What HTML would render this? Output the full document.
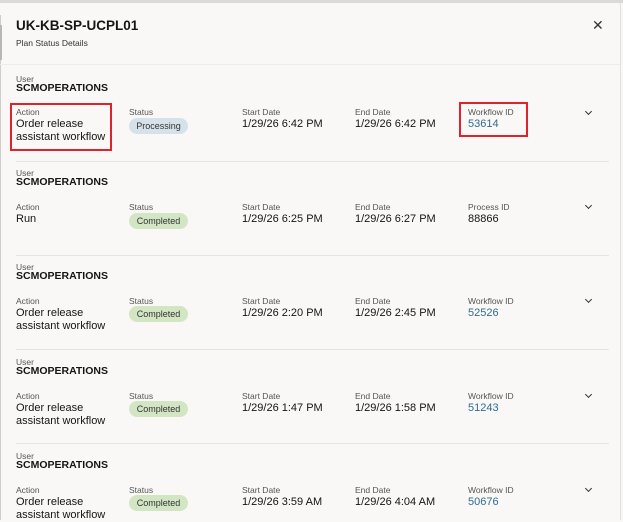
<!DOCTYPE html>
<html><head><meta charset="utf-8"><style>
*{margin:0;padding:0;box-sizing:border-box}
body{width:623px;height:520px;overflow:hidden;background:#f9f8f6;font-family:"Liberation Sans",sans-serif;color:#161513;position:relative}
.a{position:absolute;white-space:nowrap}
.lbl{font-size:8.5px;color:#555}
.val{font-size:11px;line-height:13px}
.usr{font-size:10.5px;font-weight:bold}
.pill{font-size:9px;height:16px;line-height:16px;width:59px;text-align:center;border-radius:8px;color:#333}
.g{background:#d3e6c3}
.b{background:#d6e2e9}
.lnk{color:#2f6d93}
.div{height:1px;background:#e7e5e2;left:16px;width:593px}
.chev{width:5px;height:5px;border-right:1.3px solid #333;border-bottom:1.3px solid #333;transform:rotate(45deg)}
.red{border:2px solid #e0222c}
</style></head><body>
<div class="a" style="left:0;top:0;width:623px;height:3px;background:#dcdad7"></div>
<div class="a" style="left:0;top:15px;width:1px;height:505px;background:#cfcdca"></div>
<div class="a" style="left:0;top:25px;width:2px;height:35px;background:#b9b7b4"></div>
<div class="a" style="left:620px;top:3px;width:1px;height:517px;background:#e2e0dd"></div>
<div class="a" style="left:16px;top:18px;font-size:13.5px;font-weight:bold">UK-KB-SP-UCPL01</div>
<div class="a" style="left:16px;top:38px;font-size:8.5px;color:#333">Plan Status Details</div>
<div class="a" style="left:592px;top:17px;font-size:14px;color:#333">✕</div>
<div class="a" style="left:0;top:64px;width:620px;height:1px;background:#efedea"></div>

<div class="a red" style="left:10px;top:103px;width:102px;height:48px"></div>
<div class="a red" style="left:459px;top:102px;width:69px;height:35px"></div>

<div class="a lbl" style="left:16px;top:74px">User</div>
<div class="a usr" style="left:16px;top:82px">SCMOPERATIONS</div>
<div class="a lbl" style="left:16px;top:107px">Action</div>
<div class="a val" style="left:16px;top:118px">Order release<br>assistant workflow</div>
<div class="a lbl" style="left:129px;top:107px">Status</div>
<div class="a pill b" style="left:129px;top:118px">Processing</div>
<div class="a lbl" style="left:242px;top:107px">Start Date</div>
<div class="a val" style="left:242px;top:118px">1/29/26 6:42 PM</div>
<div class="a lbl" style="left:355px;top:107px">End Date</div>
<div class="a val" style="left:355px;top:118px">1/29/26 6:42 PM</div>
<div class="a lbl" style="left:468px;top:107px">Workflow ID</div>
<div class="a val lnk" style="left:468px;top:118px">53614</div>
<div class="a chev" style="left:586px;top:109px"></div>
<div class="a div" style="top:161px"></div>

<div class="a lbl" style="left:16px;top:168px">User</div>
<div class="a usr" style="left:16px;top:176px">SCMOPERATIONS</div>
<div class="a lbl" style="left:16px;top:202px">Action</div>
<div class="a val" style="left:16px;top:213px">Run</div>
<div class="a lbl" style="left:129px;top:202px">Status</div>
<div class="a pill g" style="left:129px;top:213px">Completed</div>
<div class="a lbl" style="left:242px;top:202px">Start Date</div>
<div class="a val" style="left:242px;top:213px">1/29/26 6:25 PM</div>
<div class="a lbl" style="left:355px;top:202px">End Date</div>
<div class="a val" style="left:355px;top:213px">1/29/26 6:27 PM</div>
<div class="a lbl" style="left:468px;top:202px">Process ID</div>
<div class="a val" style="left:468px;top:213px">88866</div>
<div class="a chev" style="left:586px;top:203px"></div>
<div class="a div" style="top:255px"></div>

<div class="a lbl" style="left:16px;top:262px">User</div>
<div class="a usr" style="left:16px;top:270px">SCMOPERATIONS</div>
<div class="a lbl" style="left:16px;top:296px">Action</div>
<div class="a val" style="left:16px;top:307px">Order release<br>assistant workflow</div>
<div class="a lbl" style="left:129px;top:296px">Status</div>
<div class="a pill g" style="left:129px;top:306px">Completed</div>
<div class="a lbl" style="left:242px;top:296px">Start Date</div>
<div class="a val" style="left:242px;top:307px">1/29/26 2:20 PM</div>
<div class="a lbl" style="left:355px;top:296px">End Date</div>
<div class="a val" style="left:355px;top:307px">1/29/26 2:45 PM</div>
<div class="a lbl" style="left:468px;top:296px">Workflow ID</div>
<div class="a val lnk" style="left:468px;top:307px">52526</div>
<div class="a chev" style="left:586px;top:297px"></div>
<div class="a div" style="top:349px"></div>

<div class="a lbl" style="left:16px;top:357px">User</div>
<div class="a usr" style="left:16px;top:365px">SCMOPERATIONS</div>
<div class="a lbl" style="left:16px;top:391px">Action</div>
<div class="a val" style="left:16px;top:402px">Order release<br>assistant workflow</div>
<div class="a lbl" style="left:129px;top:391px">Status</div>
<div class="a pill g" style="left:129px;top:401px">Completed</div>
<div class="a lbl" style="left:242px;top:391px">Start Date</div>
<div class="a val" style="left:242px;top:402px">1/29/26 1:47 PM</div>
<div class="a lbl" style="left:355px;top:391px">End Date</div>
<div class="a val" style="left:355px;top:402px">1/29/26 1:58 PM</div>
<div class="a lbl" style="left:468px;top:391px">Workflow ID</div>
<div class="a val lnk" style="left:468px;top:402px">51243</div>
<div class="a chev" style="left:586px;top:392px"></div>
<div class="a div" style="top:443px"></div>

<div class="a lbl" style="left:16px;top:451px">User</div>
<div class="a usr" style="left:16px;top:459px">SCMOPERATIONS</div>
<div class="a lbl" style="left:16px;top:485px">Action</div>
<div class="a val" style="left:16px;top:496px">Order release<br>assistant workflow</div>
<div class="a lbl" style="left:129px;top:485px">Status</div>
<div class="a pill g" style="left:129px;top:495px">Completed</div>
<div class="a lbl" style="left:242px;top:485px">Start Date</div>
<div class="a val" style="left:242px;top:496px">1/29/26 3:59 AM</div>
<div class="a lbl" style="left:355px;top:485px">End Date</div>
<div class="a val" style="left:355px;top:496px">1/29/26 4:04 AM</div>
<div class="a lbl" style="left:468px;top:485px">Workflow ID</div>
<div class="a val lnk" style="left:468px;top:496px">50676</div>
<div class="a chev" style="left:586px;top:486px"></div>
</body></html>
